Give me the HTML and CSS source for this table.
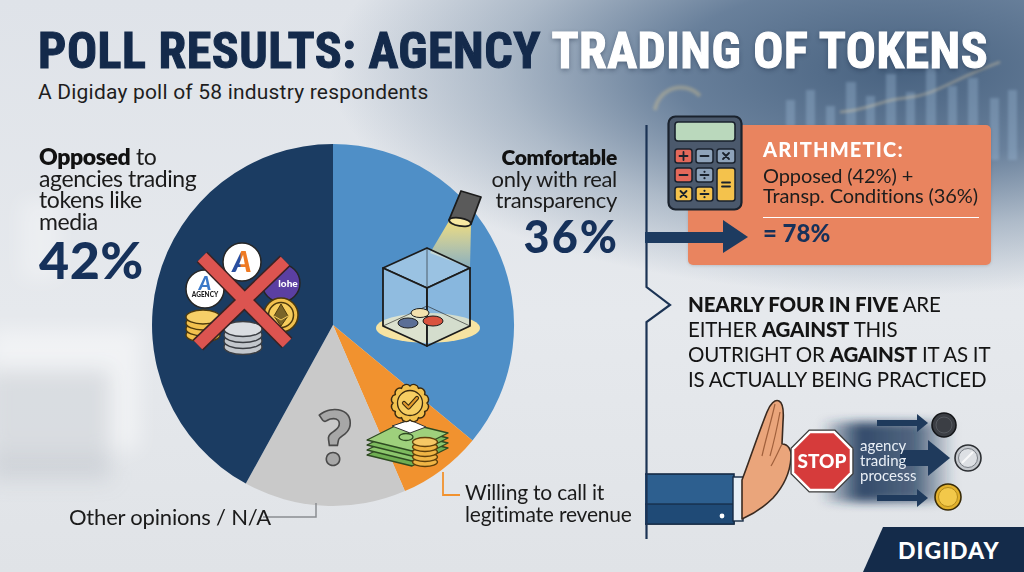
FILE: index.html
```html
<!DOCTYPE html>
<html lang="en">
<head>
<meta charset="utf-8">
<title>Poll results: agency trading of tokens</title>
<link rel="stylesheet" href="styles.css">
</head>
<body>
<div class="page">
  <svg class="backdrop" width="1024" height="572" viewBox="0 0 1024 572" aria-hidden="true">
    <defs>
      <filter id="soft" x="-20%" y="-20%" width="140%" height="140%"><feGaussianBlur stdDeviation="1.8"/></filter>
      <filter id="softer" x="-50%" y="-50%" width="200%" height="200%"><feGaussianBlur stdDeviation="10"/></filter>
    </defs>
    <g filter="url(#soft)" fill="#9fbcd8" opacity="0.35">
      <rect x="786" y="100" width="9" height="60"/>
      <rect x="806" y="90" width="9" height="70"/>
      <rect x="826" y="106" width="9" height="54"/>
      <rect x="846" y="82" width="10" height="78"/>
      <rect x="866" y="96" width="9" height="64"/>
      <rect x="886" y="74" width="10" height="86"/>
      <rect x="906" y="92" width="9" height="68"/>
      <rect x="926" y="64" width="10" height="96"/>
      <rect x="948" y="86" width="9" height="74"/>
      <rect x="968" y="78" width="10" height="82"/>
      <rect x="990" y="98" width="9" height="62"/>
      <rect x="1008" y="90" width="9" height="70"/>
    </g>
    <path d="M840 112 C870 110 880 100 905 98 C935 96 950 80 1000 62" fill="none" stroke="#f3d9a8" stroke-width="2" opacity="0.45" filter="url(#soft)"/>
    <path d="M655 110 A26 26 0 0 1 700 96" fill="none" stroke="#e9cf8f" stroke-width="4" opacity="0.35" filter="url(#soft)"/>
    <g filter="url(#softer)">
      <rect x="-10" y="330" width="150" height="120" fill="#ffffff" opacity="0.45"/>
      <rect x="-10" y="370" width="120" height="110" fill="#aeb4bd" opacity="0.35"/>
      <rect x="20" y="200" width="40" height="80" fill="#ffffff" opacity="0.3"/>
    </g>
  </svg>

  <header class="header">
    <h1 class="title"><span class="title-dark">POLL RESULTS: AGENCY</span> <span class="title-light">TRADING OF TOKENS</span></h1>
    <p class="subtitle">A Digiday poll of 58 industry respondents</p>
  </header>

  <main class="main">
    <section class="chart">
      <div class="label opp"><b>Opposed</b> to<br>agencies trading<br>tokens like<br>media<span class="big">42%</span></div>

      <svg class="pie" width="370" height="385" viewBox="0 0 370 385" aria-label="Pie chart of poll results">
        <path d="M185,185 L185,4 A181,181 0 0 1 324.5,300.4 Z" fill="#4f8fc7"/>
        <path d="M185,185 L324.5,300.4 A181,181 0 0 1 256.9,351.1 Z" fill="#f1922f"/>
        <path d="M185,185 L256.9,351.1 A181,181 0 0 1 97.8,343.6 Z" fill="#c9c9c9"/>
        <path d="M185,185 L97.8,343.6 A181,181 0 0 1 185,4 Z" fill="#1b3c62"/>

        <!-- opposed: tokens crossed out -->
        <g stroke="#262626" stroke-width="1.5">
          <circle cx="94" cy="122" r="19" fill="#ffffff"/>
          <circle cx="57" cy="149" r="19" fill="#ffffff"/>
          <circle cx="133" cy="143" r="19" fill="#5b3fa2"/>
        </g>
        <defs>
          <linearGradient id="logoA" x1="0" y1="0" x2="1" y2="0">
            <stop offset="0.45" stop-color="#2a4fa0"/>
            <stop offset="0.5" stop-color="#ef7a23"/>
          </linearGradient>
          <linearGradient id="beam" x1="0" y1="0" x2="0" y2="1">
            <stop offset="0" stop-color="#f7e07a" stop-opacity="0.95"/>
            <stop offset="1" stop-color="#f7e9a8" stop-opacity="0.35"/>
          </linearGradient>
        </defs>
        <text x="94" y="132" text-anchor="middle" class="svg-logo" font-size="29" fill="url(#logoA)">A</text>
        <text x="57" y="150" text-anchor="middle" class="svg-logo" font-size="19" fill="#3a78c8">A</text>
        <text x="57" y="157" text-anchor="middle" class="svg-small" font-size="6.5" fill="#222">AGENCY</text>
        <text x="140" y="147" text-anchor="middle" class="svg-small" font-size="10" fill="#ffffff">lohe</text>
        <g fill="#f2c14e" stroke="#4e3a0c" stroke-width="1.4">
          <ellipse cx="55" cy="195" rx="17" ry="7"/>
          <ellipse cx="55" cy="189" rx="17" ry="7"/>
          <ellipse cx="55" cy="183" rx="17" ry="7"/>
          <ellipse cx="55" cy="177" rx="17" ry="7" fill="#f6cf68"/>
        </g>
        <g stroke="#4e3a0c" stroke-width="1.5">
          <circle cx="133" cy="175" r="17" fill="#f2c14e"/>
          <circle cx="133" cy="175" r="12.5" fill="#f6cc5c"/>
          <path d="M133,164 L140,176 L133,186 L126,176 Z" fill="#7a6428" stroke-width="1"/>
          <path d="M126,176 L133,180 L140,176" fill="none" stroke="#f6cc5c" stroke-width="1"/>
        </g>
        <g fill="#c3c7cc" stroke="#3a3d42" stroke-width="1.4">
          <ellipse cx="95" cy="207" rx="19" ry="7.5"/>
          <ellipse cx="95" cy="201" rx="19" ry="7.5"/>
          <ellipse cx="95" cy="195" rx="19" ry="7.5"/>
          <ellipse cx="95" cy="189" rx="19" ry="7.5" fill="#dadde1"/>
        </g>
        <g stroke-linecap="butt">
          <line x1="54" y1="117" x2="139" y2="203" stroke="#3b2222" stroke-width="15"/>
          <line x1="137" y1="121" x2="50" y2="205" stroke="#3b2222" stroke-width="15"/>
          <line x1="54" y1="117" x2="139" y2="203" stroke="#dc5450" stroke-width="12"/>
          <line x1="137" y1="121" x2="50" y2="205" stroke="#dc5450" stroke-width="12"/>
        </g>

        <!-- transparency: spotlight on a glass box -->
        <ellipse cx="280" cy="188" rx="52" ry="15" fill="#f6e3a2"/>
        <polygon points="301,81 323,85 322,128 282,113" fill="url(#beam)"/>
        <g stroke="#1c1c1c" stroke-width="1.8" stroke-linejoin="round">
          <polygon points="301,80 323,84 333,57 313,51" fill="#5a5a5a"/>
          <ellipse cx="312" cy="82" rx="11" ry="4" transform="rotate(10 312 82)" fill="#f7e8a2"/>
        </g>
        <g stroke="#1c1c1c" stroke-linejoin="round">
          <polygon points="279,108 322,128 279,148 235,128" fill="#d8ecf8" fill-opacity="0.55" stroke-width="1.8"/>
          <polygon points="235,128 279,148 279,206 235,186" fill="#c6e2f4" fill-opacity="0.55" stroke-width="1.8"/>
          <polygon points="279,148 322,128 322,186 279,206" fill="#b8d9f0" fill-opacity="0.55" stroke-width="1.8"/>
          <path d="M279,108 V166 M279,166 L235,186 M279,166 L322,186" fill="none" stroke-width="1" stroke-opacity="0.6"/>
          <ellipse cx="272" cy="173" rx="9" ry="4.5" fill="#f3e1ae" stroke-width="1"/>
          <ellipse cx="260" cy="183" rx="10" ry="5" fill="#5b6f96" stroke-width="1"/>
          <ellipse cx="285" cy="181" rx="10" ry="5" fill="#d9533f" stroke-width="1"/>
        </g>

        <!-- other opinions -->
        <text x="187" y="325" text-anchor="middle" class="svg-q" font-size="76" fill="#a7a7a7" stroke="#4a4a4a" stroke-width="1.6">?</text>

        <!-- legitimate revenue -->
        <g stroke="#2e4a22" stroke-width="1.3" stroke-linejoin="round">
          <polygon points="219,315 255,297 300,308 264,326" fill="#6fae52"/>
          <polygon points="219,310 255,292 300,303 264,321" fill="#8cc66c"/>
          <polygon points="219,305 255,287 300,298 264,316" fill="#7dbb5e"/>
          <polygon points="219,300 255,282 300,293 264,311" fill="#9ed07c"/>
          <ellipse cx="258" cy="297" rx="7" ry="3.5" fill="none"/>
        </g>
        <polygon points="244,286 262,280 278,287 262,293" fill="#ffffff" stroke="#333" stroke-width="1"/>
        <path d="M279,263 A5,5 0 0 1 276.72,271.5 A5,5 0 0 1 270.5,277.72 A5,5 0 0 1 262,280 A5,5 0 0 1 253.5,277.72 A5,5 0 0 1 247.28,271.5 A5,5 0 0 1 245,263 A5,5 0 0 1 247.28,254.5 A5,5 0 0 1 253.5,248.28 A5,5 0 0 1 262,246 A5,5 0 0 1 270.5,248.28 A5,5 0 0 1 276.72,254.5 A5,5 0 0 1 279,263 Z" fill="#f2c14e" stroke="#3a2a10" stroke-width="1.4"/>
        <circle cx="262" cy="263" r="12.5" fill="#f6cd62" stroke="#3a2a10" stroke-width="1.3"/>
        <path d="M256,263 L260.5,267.5 L269,258" fill="none" stroke="#3a2a10" stroke-width="4.2" stroke-linecap="round" stroke-linejoin="round"/>
        <path d="M256,263 L260.5,267.5 L269,258" fill="none" stroke="#e49b2c" stroke-width="2" stroke-linecap="round" stroke-linejoin="round"/>
        <g fill="#f0b545" stroke="#5e3f0c" stroke-width="1.3">
          <ellipse cx="277" cy="322" rx="12.5" ry="4.5"/>
          <ellipse cx="277" cy="317" rx="12.5" ry="4.5"/>
          <ellipse cx="277" cy="312" rx="12.5" ry="4.5"/>
          <ellipse cx="277" cy="307" rx="12.5" ry="4.5"/>
          <ellipse cx="277" cy="302" rx="12.5" ry="4.5" fill="#f6c865"/>
        </g>

        <!-- callout leaders -->
        <path d="M168,363 V377 H115" fill="none" stroke="#8a8d91" stroke-width="1.5"/>
        <path d="M295,332 V355 H312" fill="none" stroke="#f1922f" stroke-width="1.8"/>
      </svg>

      <div class="label comf"><b>Comfortable</b><br>only with real<br>transparency<span class="big">36%</span></div>
      <div class="callout other">Other opinions / N/A</div>
      <div class="callout willing">Willing to call it<br>legitimate revenue</div>
    </section>

    <aside class="side">
      <svg class="brace" width="30" height="414" viewBox="0 0 30 414" aria-hidden="true">
        <path d="M1.5,0 V162 L25,180 L1.5,197 V414" fill="none" stroke="#1b3354" stroke-width="2.2" stroke-linejoin="miter"/>
      </svg>

      <div class="arith">
        <svg class="calc" width="76" height="96" viewBox="0 0 76 96" aria-hidden="true">
          <rect x="1.5" y="1.5" width="73" height="93" rx="7" fill="#4b596c" stroke="#1a222d" stroke-width="2.2"/>
          <rect x="8" y="7" width="60" height="19" rx="3" fill="#bad8bc" stroke="#1a222d" stroke-width="1.6"/>
          <g stroke="#1a222d" stroke-width="1.5">
            <rect x="8" y="34" width="17" height="14" rx="2.5" fill="#e4685a"/>
            <rect x="29" y="34" width="17" height="14" rx="2.5" fill="#8ea3ba"/>
            <rect x="50" y="34" width="18" height="14" rx="2.5" fill="#8ea3ba"/>
            <rect x="8" y="53" width="17" height="14" rx="2.5" fill="#e4685a"/>
            <rect x="29" y="53" width="17" height="14" rx="2.5" fill="#8ea3ba"/>
            <rect x="50" y="53" width="18" height="33" rx="2.5" fill="#f4c24c"/>
            <rect x="8" y="72" width="17" height="14" rx="2.5" fill="#f4c24c"/>
            <rect x="29" y="72" width="17" height="14" rx="2.5" fill="#f4c24c"/>
          </g>
          <g stroke="#1a222d" stroke-width="1.8" stroke-linecap="round" fill="none">
            <path d="M12.5,41 H20.5 M16.5,37 V45"/>
            <path d="M33.5,41 H41.5"/>
            <path d="M56,38 L62,44 M62,38 L56,44"/>
            <path d="M12.5,60 H20.5"/>
            <path d="M33.5,60 H41.5"/>
            <path d="M55,67.5 H63 M55,71.5 H63"/>
            <path d="M13.5,76 L19.5,82 M19.5,76 L13.5,82"/>
            <path d="M33.5,79 H41.5"/>
          </g>
          <g fill="#1a222d">
            <circle cx="37.5" cy="56.8" r="1.1"/><circle cx="37.5" cy="63.2" r="1.1"/>
            <circle cx="37.5" cy="75.8" r="1.1"/><circle cx="37.5" cy="82.2" r="1.1"/>
          </g>
        </svg>
        <div class="arith-box">
          <h2 class="arith-title">ARITHMETIC:</h2>
          <p class="arith-sum">Opposed (42%) +<br>Transp. Conditions (36%)</p>
          <hr class="arith-rule">
          <p class="arith-total">= 78%</p>
        </div>
      </div>

      <svg class="arrow" width="104" height="35" viewBox="0 0 104 35" aria-hidden="true">
        <rect x="0" y="13" width="80" height="11" fill="#1d3b60"/>
        <polygon points="78,1 103,18 78,34" fill="#1d3b60"/>
      </svg>

      <p class="statement"><b>Nearly four in five</b> are<br>either <b>against</b> this<br>outright or <b>against</b> it as it<br>is actually being practiced</p>

      <svg class="stop-art" width="379" height="140" viewBox="0 0 379 140" aria-hidden="true">
        <defs>
          <linearGradient id="streak" x1="0" y1="0" x2="1" y2="0">
            <stop offset="0" stop-color="#1e3a5c" stop-opacity="0"/>
            <stop offset="0.3" stop-color="#1e3a5c" stop-opacity="0.9"/>
            <stop offset="0.7" stop-color="#1e3a5c" stop-opacity="0.75"/>
            <stop offset="1" stop-color="#1e3a5c" stop-opacity="0"/>
          </linearGradient>
          <filter id="blur6" x="-30%" y="-30%" width="160%" height="160%"><feGaussianBlur stdDeviation="5"/></filter>
        </defs>
        <rect x="175" y="30" width="135" height="80" fill="url(#streak)" filter="url(#blur6)"/>
        <!-- arrows -->
        <g fill="#1f3a5c">
          <rect x="232" y="28" width="42" height="6"/>
          <polygon points="272,22 283,31 272,40"/>
          <rect x="255" y="58" width="30" height="16"/>
          <polygon points="283,48 305,66 283,84"/>
          <rect x="232" y="103" width="42" height="6"/>
          <polygon points="272,97 283,106 272,115"/>
        </g>
        <!-- coins -->
        <circle cx="299" cy="33" r="12" fill="#3b3e44" stroke="#141619" stroke-width="1.6"/>
        <circle cx="299" cy="33" r="8" fill="none" stroke="#55595f" stroke-width="1"/>
        <circle cx="323" cy="66" r="13" fill="#c5c9ce" stroke="#2c2f33" stroke-width="1.6"/>
        <circle cx="323" cy="66" r="9.5" fill="#dde0e4" stroke="#7b8087" stroke-width="1"/>
        <path d="M317,71 L328,60" stroke="#ffffff" stroke-width="2" opacity="0.8"/>
        <circle cx="303" cy="105" r="13" fill="#e2b12c" stroke="#3a2c08" stroke-width="1.6"/>
        <circle cx="303" cy="105" r="9.5" fill="#f2c84a" stroke="#b38a1c" stroke-width="1"/>
        <!-- sleeve and hand -->
        <rect x="-2" y="82" width="91" height="50" fill="#2d5f8f" stroke="#152a44" stroke-width="1.6"/>
        <rect x="-2" y="112" width="91" height="20" fill="#1f4a76" stroke="#152a44" stroke-width="1.2"/>
        <circle cx="77" cy="124" r="2.4" fill="#ffffff"/>
        <rect x="88" y="85" width="10" height="44" fill="#e6eef6" stroke="#152a44" stroke-width="1.4"/>
        <path d="M97,88 C104,70 112,45 122,20 C125,12 130,7 134,9 C138,11 139,18 138,30 L137,52 C143,52 147,58 146,66 C145,80 138,95 128,106 C118,116 108,122 97,127 Z" fill="#eaa57b" stroke="#3a2a20" stroke-width="1.6" stroke-linejoin="round"/>
        <path d="M130,12 C126,30 121,46 117,64 M135,20 C132,36 129,50 125,64 M137,52 C133,60 130,67 126,74" fill="none" stroke="#a0603c" stroke-width="1.2"/>
        <!-- stop sign -->
        <polygon points="189.8,38.05 207.95,56.18 207.95,81.82 189.8,99.95 164.2,99.95 146.05,81.82 146.05,56.18 164.2,38.05" fill="#ffffff" stroke="#3a3a3a" stroke-width="1.3"/>
        <polygon points="188.5,41.3 204.7,57.5 204.7,80.5 188.5,96.7 165.5,96.7 149.3,80.5 149.3,57.5 165.5,41.3" fill="#d63b3b"/>
        <text x="177" y="76" text-anchor="middle" class="svg-stop" font-size="19" fill="#ffffff">STOP</text>
        <text class="svg-process" font-size="15" fill="#e9eff6">
          <tspan x="215" y="59">agency</tspan>
          <tspan x="215" y="74">trading</tspan>
          <tspan x="215" y="89">processs</tspan>
        </text>
      </svg>
    </aside>
  </main>

  <div class="brand">DIGIDAY</div>
</div>
</body>
</html>
```

FILE: styles.css
```css
* {
  box-sizing: border-box;
  margin: 0;
  padding: 0;
}

html,
body {
  width: 1024px;
  height: 572px;
  overflow: hidden;
}

body {
  font-family: "Lato", "Noto Sans", sans-serif;
  color: #1c1c1c;
  background: #e3e7eb;
}

.page {
  position: relative;
  width: 1024px;
  height: 572px;
  overflow: hidden;
  background:
    radial-gradient(ellipse 570px 225px at 900px 70px, rgba(72, 98, 128, 1) 0%, rgba(88, 114, 144, 0.88) 40%, rgba(120, 142, 166, 0.5) 70%, rgba(150, 168, 188, 0) 100%),
    linear-gradient(180deg, #dfe3e9 0%, #e6e9ed 55%, #e0e3e7 100%);
}

.backdrop {
  position: absolute;
  left: 0;
  top: 0;
  z-index: 0;
}

.header,
.main,
.brand {
  position: relative;
  z-index: 1;
}

/* ---------- header ---------- */
.header {
  height: 105px;
  padding: 26px 0 0 38px;
}

.title {
  font-family: "Liberation Sans Narrow", "Roboto Condensed", "Liberation Sans", sans-serif;
  font-weight: 700;
  font-size: 50px;
  line-height: 50px;
  letter-spacing: 0.5px;
  white-space: nowrap;
}

.title-dark {
  color: #142a4b;
  -webkit-text-stroke: 1.1px #142a4b;
}

.title-light {
  color: #ffffff;
  -webkit-text-stroke: 1.1px #ffffff;
  text-shadow: 0 2px 5px rgba(20, 35, 60, 0.45);
}

.subtitle {
  margin-top: 4px;
  font-family: "Roboto", "Liberation Sans", sans-serif;
  font-size: 21px;
  line-height: 24px;
  letter-spacing: 0.2px;
  color: #1e1e1e;
}

/* ---------- main ---------- */
.main {
  display: flex;
  height: 467px;
}

.chart {
  flex: none;
  width: 645px;
  padding-top: 35px;
  display: grid;
  grid-template-columns: 148px 370px 127px;
  grid-template-rows: 385px;
}

.label {
  align-self: start;
  white-space: nowrap;
  z-index: 2;
  color: #1b1b1b;
}

.label b {
  font-weight: 800;
  color: #111111;
}

.big {
  display: block;
  font-weight: 900;
  color: #16315a;
}

.opp {
  grid-area: 1 / 1;
  justify-self: start;
  margin-top: 6px;
  padding-left: 39px;
  font-size: 23px;
  line-height: 21.5px;
  letter-spacing: -0.4px;
}

.opp .big {
  margin-top: 1px;
  font-size: 52px;
  line-height: 52px;
  letter-spacing: 0.5px;
}

.pie {
  grid-area: 1 / 2;
  display: block;
}

.comf {
  grid-area: 1 / 2 / 2 / 4;
  justify-self: end;
  margin: 6px 28px 0 0;
  text-align: right;
  font-size: 22px;
  line-height: 21.5px;
  letter-spacing: -0.3px;
}

.comf b {
  font-size: 21px;
}

.comf .big {
  margin: 3.5px -2px 0 0;
  font-size: 45px;
  line-height: 45px;
  letter-spacing: 2px;
}

.callout {
  align-self: start;
  justify-self: start;
  white-space: nowrap;
  color: #1b1b1b;
  z-index: 2;
}

.other {
  grid-area: 1 / 1 / 2 / 3;
  margin-top: 364.5px;
  padding-left: 69px;
  font-size: 22px;
  line-height: 24px;
  letter-spacing: -0.2px;
}

.willing {
  grid-area: 1 / 2 / 2 / 4;
  margin: 341px 0 0 317px;
  font-size: 21px;
  line-height: 22px;
  letter-spacing: -0.2px;
}

.svg-logo {
  font-family: "Lato", sans-serif;
  font-weight: 900;
  font-style: italic;
}

.svg-small {
  font-family: "Lato", sans-serif;
  font-weight: 900;
}

.svg-q {
  font-family: "Lato", sans-serif;
  font-weight: 800;
}

.svg-stop {
  font-family: "Lato", sans-serif;
  font-weight: 900;
}

.svg-process {
  font-family: "Lato", sans-serif;
  font-weight: 400;
}

/* ---------- side panel ---------- */
.side {
  position: relative;
  flex: none;
  width: 379px;
}

.brace {
  position: absolute;
  left: 0;
  top: 20px;
}

.arith {
  display: flex;
  align-items: flex-start;
  padding: 10px 0 0 22px;
}

.calc {
  flex: none;
  display: block;
  position: relative;
  z-index: 2;
}

.arith-box {
  flex: none;
  width: 303px;
  height: 140px;
  margin: 10px 0 0 -55px;
  padding: 12px 0 0 75px;
  background: #e9845f;
  border-radius: 5px;
  box-shadow: 0 1px 3px rgba(0, 0, 0, 0.12);
  color: #1d1d1d;
}

.arith-title {
  font-weight: 900;
  font-size: 20px;
  line-height: 24px;
  letter-spacing: 1.2px;
  color: #ffffff;
}

.arith-sum {
  margin-top: 4px;
  font-size: 20px;
  line-height: 20px;
  letter-spacing: -0.1px;
  white-space: nowrap;
}

.arith-rule {
  height: 1.5px;
  margin: 11.5px 12px 0 0;
  border: 0;
  background: #ffffff;
}

.arith-total {
  margin-top: 1.5px;
  font-weight: 900;
  font-size: 24px;
  line-height: 26px;
  color: #16315a;
}

.arrow {
  position: absolute;
  left: 0;
  top: 114px;
  z-index: 3;
}

.statement {
  margin-top: 26.6px;
  padding-left: 43px;
  font-size: 20.5px;
  line-height: 25px;
  letter-spacing: -0.2px;
  text-transform: uppercase;
  white-space: nowrap;
  color: #141414;
}

.statement b {
  font-weight: 900;
}

.stop-art {
  display: block;
}

/* ---------- brand badge ---------- */
.brand {
  position: absolute;
  right: 0;
  bottom: 0;
  width: 161px;
  height: 45px;
  padding: 9px 0 0 35px;
  background: #142b4a;
  clip-path: polygon(20px 0, 100% 0, 100% 100%, 0 100%);
  color: #ffffff;
  font-weight: 900;
  font-size: 23px;
  line-height: 28px;
  letter-spacing: 1px;
  z-index: 2;
}
```
